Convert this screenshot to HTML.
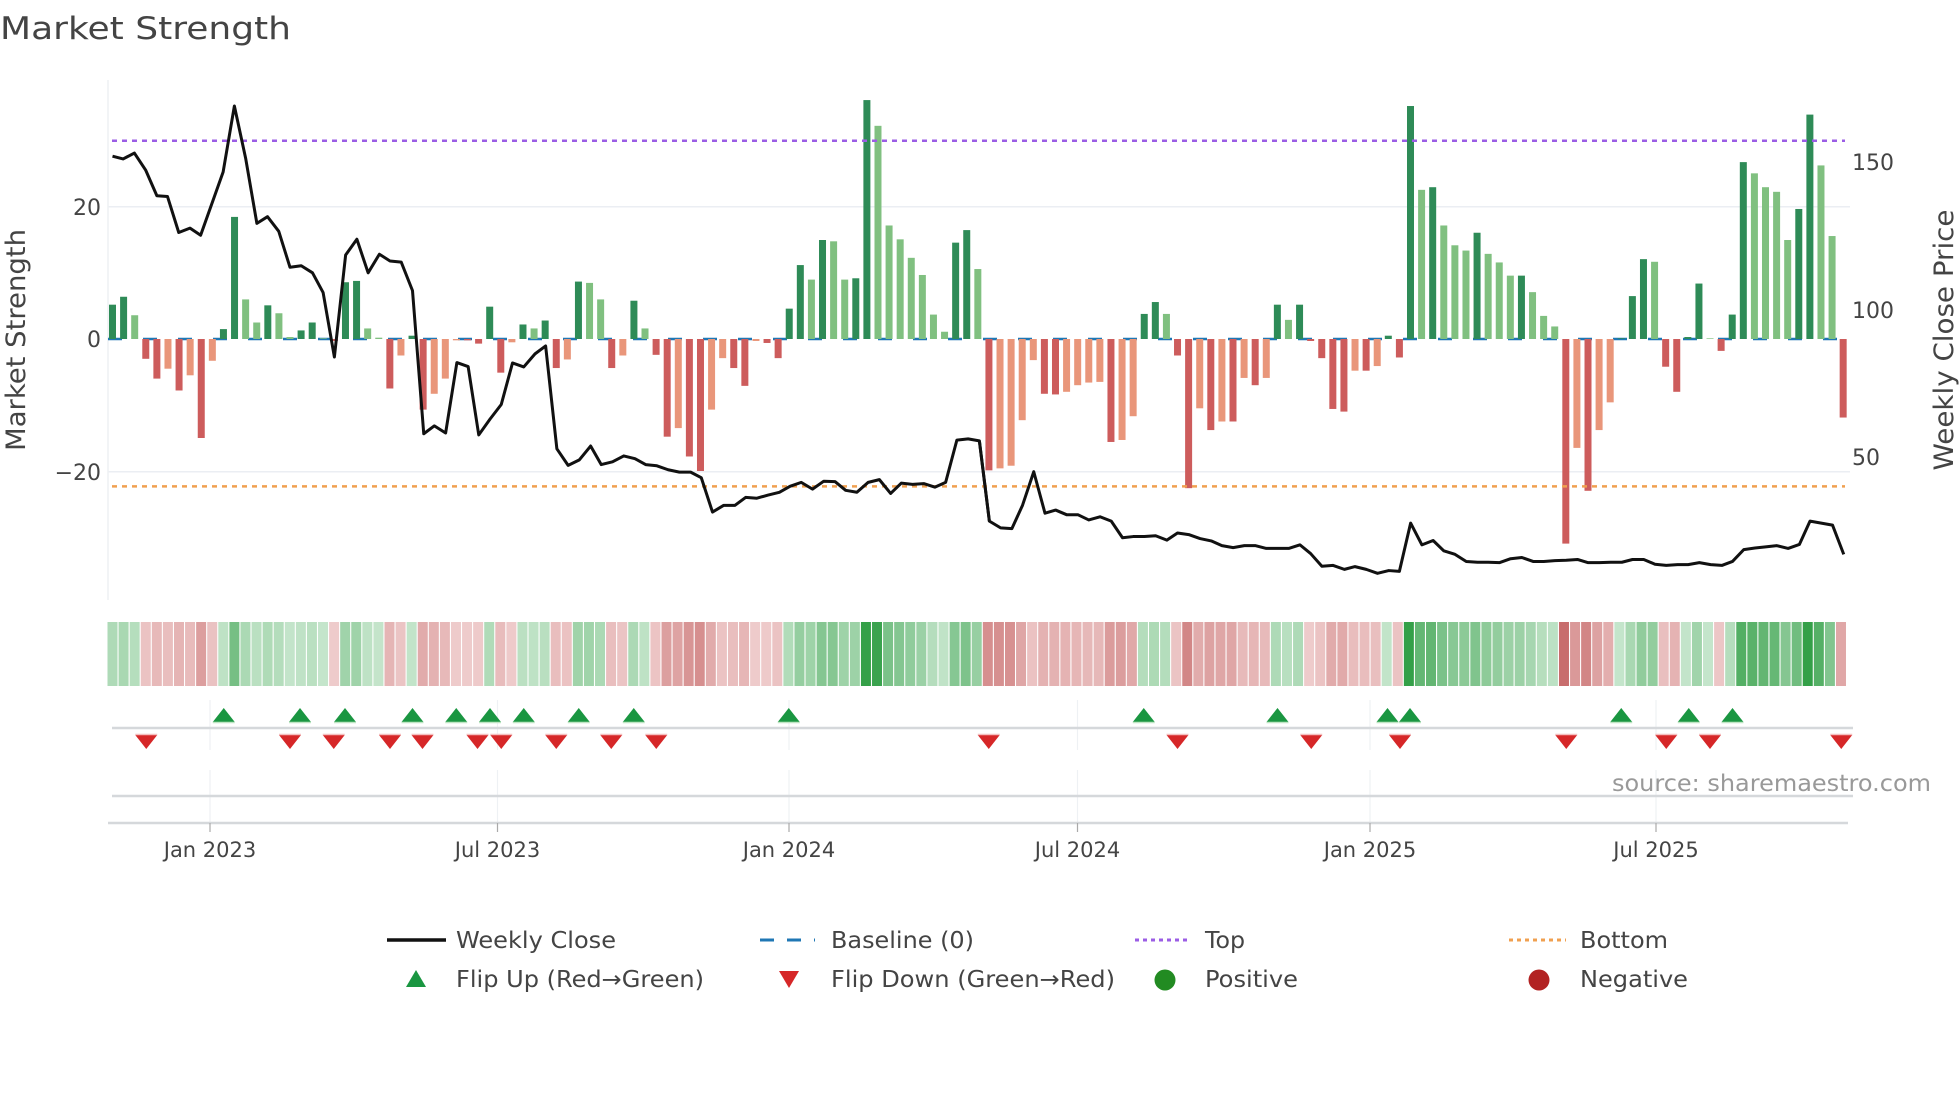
<!DOCTYPE html>
<html><head><meta charset="utf-8">
<style>
html,body{margin:0;padding:0;background:#fff;}
svg{display:block;font-family:"DejaVu Sans","Liberation Sans",sans-serif;}
</style></head>
<body>
<svg id="s" xmlns="http://www.w3.org/2000/svg" width="1960" height="1102" viewBox="0 0 1960 1102">
<rect width="1960" height="1102" fill="#fff"/>
<text x="0" y="39" font-size="31" fill="#444" textLength="291" lengthAdjust="spacingAndGlyphs">Market Strength</text>
<g stroke="#ebeef3" stroke-width="1.5">
<line x1="108" y1="206.8" x2="1850" y2="206.8"/>
<line x1="108" y1="471.7" x2="1850" y2="471.7"/>
</g>
<line x1="108" y1="80" x2="108" y2="600" stroke="#eef0f3" stroke-width="1.5"/>
<g font-size="22" fill="#444" text-anchor="end">
<text x="101" y="215">20</text>
<text x="101" y="347">0</text>
<text x="101" y="480">−20</text>
</g>
<g font-size="22" fill="#444">
<text x="1852" y="170">150</text>
<text x="1852" y="318">100</text>
<text x="1852" y="465">50</text>
</g>
<text transform="translate(25,340) rotate(-90)" font-size="27" fill="#444" text-anchor="middle" textLength="222" lengthAdjust="spacingAndGlyphs">Market Strength</text>
<text transform="translate(1953,340) rotate(-90)" font-size="27" fill="#444" text-anchor="middle" textLength="261" lengthAdjust="spacingAndGlyphs">Weekly Close Price</text>
<line x1="108" y1="339" x2="1848" y2="339" stroke="#1f77b4" stroke-width="2.5" stroke-dasharray="14 21"/>
<g id="bars"></g>
<line x1="112" y1="140.8" x2="1845" y2="140.8" stroke="#9b5de5" stroke-width="2.5" stroke-dasharray="5 5"/>
<line x1="112" y1="486.4" x2="1845" y2="486.4" stroke="#f0a050" stroke-width="2.5" stroke-dasharray="5 5"/>
<g transform="scale(0.625 0.3954)">
<polyline vector-effect="non-scaling-stroke" fill="none" stroke="#111" stroke-width="3" stroke-linejoin="round" points="180,395 197,402 215,387 233,430 251,495 268,497 286,588 304,577 321,595 339,515 357,435 375,268 393,400 411,565 428,548 446,585 464,676 482,672 500,690 517,740 535,903 553,645 571,605 589,690 607,643 624,660 642,663 660,735 678,1097 695,1077 713,1095 731,917 749,927 766,1100 784,1060 802,1023 820,918 838,928 856,895 873,875 891,1135 909,1177 927,1163 945,1128 962,1175 980,1168 998,1153 1016,1160 1033,1175 1051,1178 1069,1188 1087,1194 1105,1194 1122,1208 1140,1295 1158,1278 1176,1278 1193,1258 1211,1260 1229,1252 1247,1245 1264,1230 1282,1220 1300,1237 1318,1217 1336,1218 1353,1240 1371,1245 1389,1220 1407,1213 1425,1248 1442,1222 1460,1225 1478,1223 1496,1232 1513,1220 1531,1113 1549,1110 1567,1115 1583,1318"/>
</g>
<g transform="translate(980 0) scale(0.625 0.3954)">
<polyline vector-effect="non-scaling-stroke" fill="none" stroke="#111" stroke-width="3" stroke-linejoin="round" points="-1,1115 15,1318 33,1335 51,1337 68,1278 86,1193 104,1298 121,1290 139,1302 157,1302 174,1315 192,1307 210,1318 228,1360 245,1357 263,1357 281,1355 299,1366 316,1348 334,1352 352,1362 370,1368 387,1380 405,1385 423,1380 441,1380 458,1387 476,1387 494,1387 512,1378 529,1400 547,1432 565,1430 583,1440 600,1433 618,1440 636,1450 654,1443 671,1445 689,1323 707,1378 725,1367 742,1393 760,1402 778,1420 796,1422 813,1422 831,1423 849,1413 867,1410 885,1420 902,1420 920,1418 938,1417 956,1415 973,1423 991,1423 1009,1422 1027,1422 1044,1415 1062,1415 1080,1427 1098,1430 1116,1428 1133,1428 1151,1423 1169,1428 1187,1430 1204,1420 1222,1390 1240,1386 1257,1383 1275,1380 1293,1387 1311,1377 1328,1318 1346,1323 1364,1328 1382,1402"/>
</g>
<g id="heat"></g>
<g stroke="#eef1f4" stroke-width="1.2">
<line x1="210" y1="700" x2="210" y2="750"/><line x1="497.5" y1="700" x2="497.5" y2="750"/><line x1="789" y1="700" x2="789" y2="750"/><line x1="1077.5" y1="700" x2="1077.5" y2="750"/><line x1="1370" y1="700" x2="1370" y2="750"/><line x1="1656" y1="700" x2="1656" y2="750"/>
<line x1="210" y1="770" x2="210" y2="823"/><line x1="497.5" y1="770" x2="497.5" y2="823"/><line x1="789" y1="770" x2="789" y2="823"/><line x1="1077.5" y1="770" x2="1077.5" y2="823"/><line x1="1370" y1="770" x2="1370" y2="823"/><line x1="1656" y1="770" x2="1656" y2="823"/>
</g>
<line x1="112" y1="728" x2="1853" y2="728" stroke="#d5d8db" stroke-width="2.5"/>
<g id="tri"></g>
<line x1="112" y1="796" x2="1853" y2="796" stroke="#d5d8db" stroke-width="2.5"/>
<line x1="108" y1="823" x2="1848" y2="823" stroke="#d5d8db" stroke-width="2.5"/>
<g stroke="#aaa" stroke-width="1.2">
<line x1="210" y1="823" x2="210" y2="832"/><line x1="497.5" y1="823" x2="497.5" y2="832"/><line x1="789" y1="823" x2="789" y2="832"/><line x1="1077.5" y1="823" x2="1077.5" y2="832"/><line x1="1370" y1="823" x2="1370" y2="832"/><line x1="1656" y1="823" x2="1656" y2="832"/>
</g>
<g font-size="21" fill="#444" text-anchor="middle">
<text x="210" y="857">Jan 2023</text>
<text x="497.5" y="857">Jul 2023</text>
<text x="789" y="857">Jan 2024</text>
<text x="1077.5" y="857">Jul 2024</text>
<text x="1370" y="857">Jan 2025</text>
<text x="1656" y="857">Jul 2025</text>
</g>
<text x="1612" y="791" font-size="23" fill="#999" textLength="319" lengthAdjust="spacingAndGlyphs">source: sharemaestro.com</text>
<g font-size="23" fill="#444">
<line x1="387" y1="940" x2="446" y2="940" stroke="#111" stroke-width="3.5"/>
<text x="456" y="948" textLength="160" lengthAdjust="spacingAndGlyphs">Weekly Close</text>
<line x1="760" y1="940" x2="815" y2="940" stroke="#1f77b4" stroke-width="3" stroke-dasharray="14 13"/>
<text x="831" y="948" textLength="143" lengthAdjust="spacingAndGlyphs">Baseline (0)</text>
<line x1="1135" y1="940" x2="1191" y2="940" stroke="#9b5de5" stroke-width="3" stroke-dasharray="4 4"/>
<text x="1205" y="948" textLength="40" lengthAdjust="spacingAndGlyphs">Top</text>
<line x1="1509" y1="940" x2="1566" y2="940" stroke="#f0a050" stroke-width="3" stroke-dasharray="4 4"/>
<text x="1580" y="948" textLength="88" lengthAdjust="spacingAndGlyphs">Bottom</text>
<polygon points="406,987 426,987 416,970" fill="#1a9641"/>
<text x="456" y="987" textLength="248" lengthAdjust="spacingAndGlyphs">Flip Up (Red→Green)</text>
<polygon points="779,971 799,971 789,988" fill="#d62728"/>
<text x="831" y="987" textLength="284" lengthAdjust="spacingAndGlyphs">Flip Down (Green→Red)</text>
<circle cx="1165" cy="980" r="10.5" fill="#228b22"/>
<text x="1205" y="987" textLength="93" lengthAdjust="spacingAndGlyphs">Positive</text>
<circle cx="1539" cy="980" r="10.5" fill="#b22222"/>
<text x="1580" y="987" textLength="108" lengthAdjust="spacingAndGlyphs">Negative</text>
</g>
</svg>
<script>
var v=[5.2,6.4,3.6,-3,-6,-4.5,-7.8,-5.5,-15,-3.3,1.5,18.5,6,2.5,5.1,3.9,0.3,1.3,2.5,0.1,-0.3,8.6,8.8,1.6,0.2,-7.5,-2.5,0.5,-10.7,-8.3,-6,-0.2,-0.2,-0.7,4.9,-5.1,-0.5,2.2,1.6,2.8,-4.4,-3.1,8.7,8.5,6,-4.4,-2.5,5.8,1.6,-2.4,-14.8,-13.5,-17.8,-20,-10.7,-2.9,-4.4,-7.1,-0.3,-0.6,-2.9,4.6,11.2,9,15,14.8,9,9.2,36.2,32.3,17.2,15.1,12.3,9.7,3.7,1.1,14.6,16.5,10.6,
-19.9,-19.6,-19.2,-12.3,-3.2,-8.3,-8.4,-8,-7,-6.6,-6.5,-15.6,-15.3,-11.7,3.8,5.6,3.8,-2.5,-22.6,-10.5,-13.8,-12.5,-12.5,-5.9,-7,-5.9,5.2,2.9,5.2,-0.3,-2.9,-10.6,-11,-4.8,-4.8,-4.1,0.5,-2.8,35.3,22.6,23,17.2,14.2,13.4,16.1,12.9,11.6,9.6,9.6,7.1,3.5,1.9,-31,-16.5,-23,-13.8,-9.6,0.1,6.5,12.1,11.7,-4.2,-8,0.3,8.4,0.1,-1.8,3.7,26.8,25.1,23,22.3,15,19.7,34,26.3,15.6,-11.9];
var NS="http://www.w3.org/2000/svg";
function el(t,a,p){var e=document.createElementNS(NS,t);for(var k in a)e.setAttribute(k,a[k]);p.appendChild(e);return e;}
var bars=document.getElementById('bars'),heat=document.getElementById('heat'),tri=document.getElementById('tri');
var U=6.6,Y0=339,W=7;
function mix(a,b,t){return 'rgb('+[0,1,2].map(function(i){return Math.round(a[i]+(b[i]-a[i])*t)}).join(',')+')';}
for(var i=0;i<v.length;i++){
 var x=112.5+i*11.094,val=v[i],p=i?v[i-1]:0;
 var dark=(i==0)||(val>=0)!=(p>=0)||Math.abs(val)>=Math.abs(p);
 var c=val>=0?(dark?'#2e8b57':'#80c080'):(dark?'#cd5c5c':'#e9967a');
 var h=Math.abs(val)*U;
 if(h>0.5) el('rect',{x:x-W/2,y:val>=0?Y0-h:Y0,width:W,height:h,fill:c},bars);
 var t=Math.min(Math.abs(val)/34,1);t=0.15+0.85*t;
 var col=val>=0?mix([222,241,226],[52,160,72],t):mix([246,222,222],[196,100,100],t);
 el('rect',{x:107.5+i*11.08,y:622,width:10,height:64,fill:col},heat);
}
var up=[179,240,276,330,365,392,419,463,507,631,915,1022,1110,1128,1297,1351,1386];
var dn=[117,232,267,312,338,382,401,445,489,525,791,942,1049,1120,1253,1333,1368,1473];
up.forEach(function(z){var x=z*1.25;el('polygon',{points:(x-11)+',722 '+(x+11)+',722 '+x+',708',fill:'#1a9641'},tri);el('line',{x1:x-11,y1:722.5,x2:x+11,y2:722.5,stroke:'#bfe5c4','stroke-width':1.5},tri);});
dn.forEach(function(z){var x=z*1.25;el('polygon',{points:(x-11)+',735 '+(x+11)+',735 '+x+',749',fill:'#d62728'},tri);el('line',{x1:x-11,y1:734.5,x2:x+11,y2:734.5,stroke:'#f4c0c0','stroke-width':1.5},tri);});
</script>
</body></html>
